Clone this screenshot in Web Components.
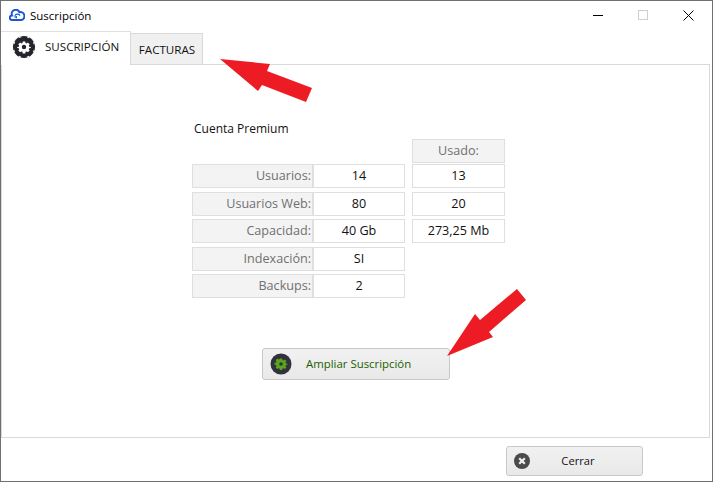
<!DOCTYPE html>
<html lang="es">
<head>
<meta charset="utf-8">
<title>Suscripción</title>
<style>
    html, body { margin: 0; padding: 0; background: #fff; }
    body { font-family: "Open Sans", "Noto Sans", sans-serif; font-size: 12.6px; color: #000; }
</style>
</head>
<body>
<sub-window>
    <title-bar slot="title" text="Suscripción"></title-bar>
    <tab-strip slot="tabs"></tab-strip>
    <info-table>
        <info-row label="Usuarios:" value="14" used="13"></info-row>
        <info-row label="Usuarios Web:" value="80" used="20"></info-row>
        <info-row label="Capacidad:" value="40 Gb" used="273,25 Mb"></info-row>
        <info-row label="Indexación:" value="SI"></info-row>
        <info-row label="Backups:" value="2"></info-row>
    </info-table>
    <action-button icon="gear" text="Ampliar Suscripción" slot="action"></action-button>
    <action-button icon="close" text="Cerrar" slot="footer"></action-button>
</sub-window>
<script>
class SubWindow extends HTMLElement {
    constructor() {
        super();
        this.attachShadow({ mode: 'open' });
        this.shadowRoot.innerHTML = `
    <style>
        :host {
            display: flex;
            flex-direction: column;
            position: relative;
            box-sizing: border-box;
            width: 713px;
            height: 482px;
            border: 1px solid #707070;
            background: #fff;
            overflow: hidden;
        }
        .pane {
            flex: none;
            box-sizing: border-box;
            height: 373px;
            margin-right: 2px;
            border: 1px solid #d9d9d9;
            border-top: 0;
            display: flex;
            flex-direction: column;
            align-items: flex-start;
        }
        .center {
            margin-left: 190px;
            margin-top: 54px;
        }
        .action { margin: 50px 0 0 260px; }
        .footer {
            flex: 1;
            display: flex;
            justify-content: flex-end;
            align-items: flex-start;
            padding: 8px 69px 0 0;
        }
        .arrow {
            position: absolute;
            left: -1px;
            top: -1px;
            pointer-events: none;
        }
    </style>
    <slot name="title"></slot>
    <slot name="tabs"></slot>
    <div class="pane">
        <div class="center"><slot></slot></div>
        <div class="action"><slot name="action"></slot></div>
    </div>
    <div class="footer"><slot name="footer"></slot></div>
    <svg class="arrow" width="713" height="482" viewBox="0 0 713 482">
        <polygon fill="#ed1c24" points="220,59 270,64 267,71 312,88 306,102 262,85 258,91"/>
        <polygon fill="#ed1c24" points="447,356 475,314 480,320 517,289 526,300 489,332 493,337"/>
    </svg>
        `;
    }
}
customElements.define('sub-window', SubWindow);

class TitleBar extends HTMLElement {
    constructor() {
        super();
        this.attachShadow({ mode: 'open' });
        this.shadowRoot.innerHTML = `
    <style>
        :host {
            display: flex;
            align-items: center;
            box-sizing: border-box;
            height: 30px;
            padding: 0 0 2px 8px;
            font-size: 11.5px;
        }
        .logo { margin-right: 5px; }
        .text { flex: 1; }
        .ctl {
            display: flex;
            justify-content: center;
            align-items: center;
            width: 46px;
            height: 28px;
        }
        .ctl.min { width: 44px; }
        .ctl.last { width: 44px; margin-right: 2px; }
    </style>
    <svg class="logo" width="16" height="12" viewBox="0 0 16 12">
        <path d="M3.8 11H3.2A2.3 2.3 0 0 1 3 6.4 4 4 0 0 1 10.4 3.2 3.5 3.5 0 0 1 12.4 11H3.8" fill="none" stroke="#1a56d6" stroke-width="2"/>
        <path d="M11 6.6A3 3 0 0 0 5.8 6.8" fill="none" stroke="#1a56d6" stroke-width="1.3"/>
        <path d="M4.6 7.8L8 9.4 8 7z" fill="#1a56d6"/>
    </svg>
    <span class="text"></span>
    <span class="ctl min"><svg width="11" height="11"><rect x="0" y="5" width="10" height="1" fill="#000"/></svg></span>
    <span class="ctl"><svg width="11" height="11"><rect x="0.5" y="0.5" width="9" height="9" fill="none" stroke="#cfcfcf"/></svg></span>
    <span class="ctl last"><svg width="11" height="11"><path d="M0.5 0.5L10.5 10.5M10.5 0.5L0.5 10.5" stroke="#000" fill="none"/></svg></span>
        `;
    }
    connectedCallback() {
        this.shadowRoot.querySelector('.text').textContent = this.getAttribute('text');
    }
}
customElements.define('title-bar', TitleBar);

class TabStrip extends HTMLElement {
    constructor() {
        super();
        this.attachShadow({ mode: 'open' });
        this.shadowRoot.innerHTML = `
    <style>
        :host {
            display: flex;
            align-items: flex-end;
            height: 34px;
            margin-right: 2px;
            font-size: 11.6px;
            box-sizing: border-box;
        }
        .tab {
            display: flex;
            align-items: center;
            box-sizing: border-box;
            color: #111;
        }
        .active {
            width: 130px;
            height: 34px;
            padding: 0 0 4px 12px;
            background: #fff;
            border: 1px solid #d9d9d9;
            border-bottom: 0;
            border-left: 0;
            border-top-color: #e0e0e0;
        }
        .active svg { margin-right: 10px; flex: none; }
        .other {
            width: 72px;
            height: 32px;
            justify-content: center;
            padding-left: 1px;
            background: #f0f0f0;
            border: 1px solid #d9d9d9;
            border-left: 0;
        }
        .rest {
            flex: 1;
            height: 1px;
            background: #d9d9d9;
        }
    </style>
    <div class="tab active">
        <svg width="22" height="22" viewBox="0 0 22 22">
            <circle cx="11" cy="11" r="11" fill="#24242c"/>
            <circle cx="11" cy="11" r="10.6" fill="none" stroke="#fff" stroke-width="1" stroke-dasharray="2.4 5.92" stroke-dashoffset="1.2" transform="rotate(22.5 11 11)"/>
            <path fill="#fff" fill-rule="evenodd" d="M9.5 4.4h3l.3 1.9 1.2.5 1.6-1.1 2.1 2.1-1.1 1.6.5 1.2 1.9.3v1.2l-1.9.3-.5 1.2 1.1 1.6-2.1 2.1-1.6-1.1-1.2.5-.3 1.9h-3l-.3-1.9-1.2-.5-1.6 1.1-2.1-2.1 1.1-1.6-.5-1.2-1.9-.3v-1.2l1.9-.3.5-1.2-1.1-1.6 2.1-2.1 1.6 1.1 1.2-.5z M11 8.4a2.6 2.6 0 1 0 0 5.2 2.6 2.6 0 0 0 0-5.2z" transform="translate(11 11) scale(.85) translate(-11 -11)"/>
        </svg>
        <span>SUSCRIPCIÓN</span>
    </div>
    <div class="tab other">FACTURAS</div>
    <div class="rest"></div>
        `;
    }
}
customElements.define('tab-strip', TabStrip);

class InfoTable extends HTMLElement {
    constructor() {
        super();
        this.attachShadow({ mode: 'open' });
        this.shadowRoot.innerHTML = `
    <style>
        :host { display: block; width: 313px; }
        .heading {
            height: 20px;
            line-height: 20px;
            padding-left: 2px;
            font-size: 12px;
            color: #111;
        }
        .used-head {
            box-sizing: border-box;
            width: 93px;
            height: 24px;
            margin: 0 0 1px 220px;
            background: #f3f3f3;
            border: 1px solid #dfdfdf;
            color: #707070;
            text-align: center;
            line-height: 22px;
        }
        .rows { display: flex; flex-direction: column; gap: 3.6px; }
    </style>
    <div class="heading">Cuenta Premium</div>
    <div class="used-head">Usado:</div>
    <div class="rows"><slot></slot></div>
        `;
    }
}
customElements.define('info-table', InfoTable);

class InfoRow extends HTMLElement {
    constructor() {
        super();
        this.attachShadow({ mode: 'open' });
        this.shadowRoot.innerHTML = `
    <style>
        :host {
            display: grid;
            grid-template-columns: 121px 92px 93px;
            column-gap: 0;
            height: 24px;
        }
        div {
            box-sizing: border-box;
            height: 24px;
            line-height: 22px;
            border: 1px solid #dfdfdf;
        }
        .label {
            background: #f3f3f3;
            color: #707070;
            text-align: right;
            padding-right: 1px;
        }
        .value { text-align: center; color: #111; }
        .used { text-align: center; color: #111; margin-left: 7px; width: 93px; }
        .used.none { visibility: hidden; }
    </style>
    <div class="label"></div>
    <div class="value"></div>
    <div class="used"></div>
        `;
    }
    connectedCallback() {
        this.shadowRoot.querySelector('.label').textContent = this.getAttribute('label');
        this.shadowRoot.querySelector('.value').textContent = this.getAttribute('value');
        const used = this.shadowRoot.querySelector('.used');
        if (this.hasAttribute('used')) {
            used.textContent = this.getAttribute('used');
        } else {
            used.classList.add('none');
        }
    }
}
customElements.define('info-row', InfoRow);

class ActionButton extends HTMLElement {
    constructor() {
        super();
        this.attachShadow({ mode: 'open' });
        this.shadowRoot.innerHTML = `
    <style>
        :host {
            display: block;
            box-sizing: border-box;
            border: 1px solid #c8c8c8;
            border-radius: 3px;
            background: linear-gradient(#f1f1f1, #e9e9e9);
        }
        .box { display: flex; align-items: center; height: 100%; }
        .text { position: relative; top: -1px; }
        :host([icon="gear"]) { width: 188px; height: 32px; color: #1c5e00; font-size: 11.4px; }
        :host([icon="gear"]) .box { padding-left: 7px; }
        :host([icon="gear"]) svg { margin-right: 14px; }
        :host([icon="close"]) { width: 137px; height: 30px; color: #111; font-size: 11.2px; }
        :host([icon="close"]) .box { padding-left: 7px; }
        :host([icon="close"]) .text { flex: 1; text-align: center; padding-right: 16px; }
        svg { flex: none; }
    </style>
    <div class="box"></div>
        `;
    }
    connectedCallback() {
        const icons = {
            gear: `<svg width="22" height="22" viewBox="0 0 22 22">
                <circle cx="11" cy="11" r="10.5" fill="#32323c"/>
                <path fill="#5aa41e" fill-rule="evenodd" d="M9.7 4.8h2.6l.3 1.7 1.2.5 1.4-1 1.8 1.8-1 1.4.5 1.2 1.7.3v1.2l-1.7.3-.5 1.2 1 1.4-1.8 1.8-1.4-1-1.2.5-.3 1.7H9.7l-.3-1.7-1.2-.5-1.4 1-1.8-1.8 1-1.4-.5-1.2-1.7-.3V9.7l1.7-.3.5-1.2-1-1.4 1.8-1.8 1.4 1 1.2-.5z M11 9a2 2 0 1 0 0 4 2 2 0 0 0 0-4z" transform="translate(11 11) scale(.9) translate(-11 -11)"/>
            </svg>`,
            close: `<svg width="16" height="16" viewBox="0 0 16 16">
                <circle cx="8" cy="8" r="8" fill="#4a4a4a"/>
                <path d="M5.2 5.2L10.8 10.8M10.8 5.2L5.2 10.8" stroke="#f0f0f0" stroke-width="2.2" fill="none"/>
            </svg>`
        };
        const box = this.shadowRoot.querySelector('.box');
        box.innerHTML = icons[this.getAttribute('icon')] + '<span class="text"></span>';
        box.querySelector('.text').textContent = this.getAttribute('text');
    }
}
customElements.define('action-button', ActionButton);
</script>
</body>
</html>
